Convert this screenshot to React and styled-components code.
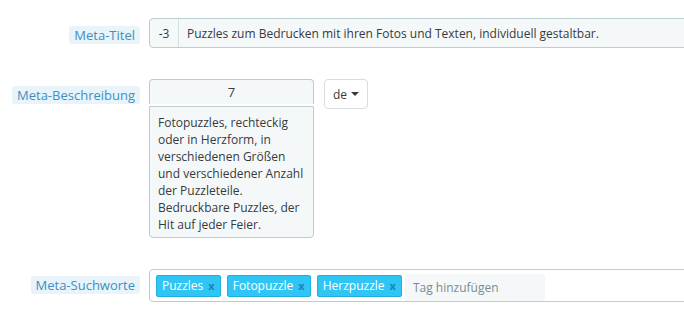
import React from "react"
import styled, { createGlobalStyle } from 'styled-components'

const Global = createGlobalStyle`
  html, body {
    margin: 0;
    padding: 0;
    overflow: hidden;
    background: #fff;
  }
  body {
    font-family: 'Open Sans', 'Liberation Sans', sans-serif;
    font-size: 12px;
    color: #363a41;
  }
`

const Form = styled.div`
  width: 100%;
  overflow: hidden;
  padding-top: 18px;
`

const Row = styled.div`
  display: grid;
  grid-template-columns: 140px 1fr;
  column-gap: 9px;
  align-items: start;
  margin-bottom: 31px;
`

const LabelCell = styled.div`
  display: flex;
  justify-content: flex-end;
  padding-top: ${p => p.top || 7}px;
`

const Label = styled.span`
  display: inline-block;
  height: 18px;
  line-height: 18px;
  padding: 0 5px;
  border-radius: 3px;
  background: #e8f4fa;
  color: #3f8fbf;
  font-size: 13px;
`

const InputGroup = styled.div`
  display: flex;
  height: 30px;
  width: 560px;
  border: 1px solid #bbcdd2;
  border-radius: 4px;
  background: #f5f8f9;
  box-sizing: border-box;
`

const Addon = styled.div`
  width: 28px;
  display: flex;
  align-items: center;
  justify-content: center;
  border-right: 1px solid #d4dfe2;
`

const InputText = styled.div`
  display: flex;
  align-items: center;
  padding-left: 8px;
`

const DescField = styled.div`
  display: flex;
  gap: 10px;
  align-items: flex-start;
`

const DescColumn = styled.div`
  width: 165px;
  display: flex;
  flex-direction: column;
  gap: 2px;
`

const Counter = styled.div`
  height: 25px;
  box-sizing: border-box;
  border: 1px solid #bbcdd2;
  border-bottom: none;
  border-radius: 4px 4px 0 0;
  background: #f5f8f9;
  text-align: center;
  line-height: 24px;
  font-size: 13px;
`

const TextArea = styled.div`
  height: 132px;
  box-sizing: border-box;
  border: 1px solid #bbcdd2;
  border-radius: 0 0 4px 4px;
  background: #f5f8f9;
  padding: 7px 8px;
  line-height: 17px;
`

const LangButton = styled.div`
  height: 30px;
  width: 44px;
  box-sizing: border-box;
  border: 1px solid #d5dde0;
  border-radius: 4px;
  background: #fff;
  display: flex;
  align-items: center;
  justify-content: center;
  gap: 4px;
  font-size: 12px;
`

const Caret = styled.span`
  width: 0;
  height: 0;
  border-left: 4px solid transparent;
  border-right: 4px solid transparent;
  border-top: 4px solid #363a41;
`

const TagBox = styled.div`
  display: flex;
  align-items: center;
  gap: 6px;
  height: 33px;
  width: 560px;
  box-sizing: border-box;
  border: 1px solid #bbcdd2;
  border-radius: 4px;
  background: #fff;
  padding: 0 6px;
`

const Tag = styled.span`
  display: inline-flex;
  align-items: center;
  gap: 5px;
  height: 22px;
  box-sizing: border-box;
  padding: 0 5px 0 5px;
  background: #2fc5f5;
  border: 1px solid #1fb0e0;
  border-radius: 2px;
  color: #fff;
  font-size: 12px;
`

const Remove = styled.span`
  color: #1a86b8;
  font-weight: bold;
  font-size: 11px;
`

const TagInput = styled.div`
  height: 27px;
  width: 140px;
  margin-left: -3px;
  margin-top: 4px;
  align-self: flex-start;
  background: #f5f8f9;
  border-radius: 3px;
  color: #7a8b91;
  display: flex;
  align-items: center;
  padding-left: 8px;
  box-sizing: border-box;
  font-size: 12px;
`

const tags = ['Puzzles', 'Fotopuzzle', 'Herzpuzzle']

export default function App() {
  return (
    <Form>
      <Global />
      <Row>
        <LabelCell top={8}><Label>Meta-Titel</Label></LabelCell>
        <InputGroup>
          <Addon>-3</Addon>
          <InputText>Puzzles zum Bedrucken mit ihren Fotos und Texten, individuell gestaltbar.</InputText>
        </InputGroup>
      </Row>
      <Row>
        <LabelCell><Label>Meta-Beschreibung</Label></LabelCell>
        <DescField>
          <DescColumn>
            <Counter>7</Counter>
            <TextArea>
              Fotopuzzles, rechteckig oder in Herzform, in verschiedenen Größen und verschiedener Anzahl der Puzzleteile. Bedruckbare Puzzles, der Hit auf jeder Feier.
            </TextArea>
          </DescColumn>
          <LangButton>de <Caret /></LangButton>
        </DescField>
      </Row>
      <Row>
        <LabelCell top={7}><Label>Meta-Suchworte</Label></LabelCell>
        <TagBox>
          {tags.map(t => (
            <Tag key={t}>{t}<Remove>x</Remove></Tag>
          ))}
          <TagInput>Tag hinzufügen</TagInput>
        </TagBox>
      </Row>
    </Form>
  )
}
